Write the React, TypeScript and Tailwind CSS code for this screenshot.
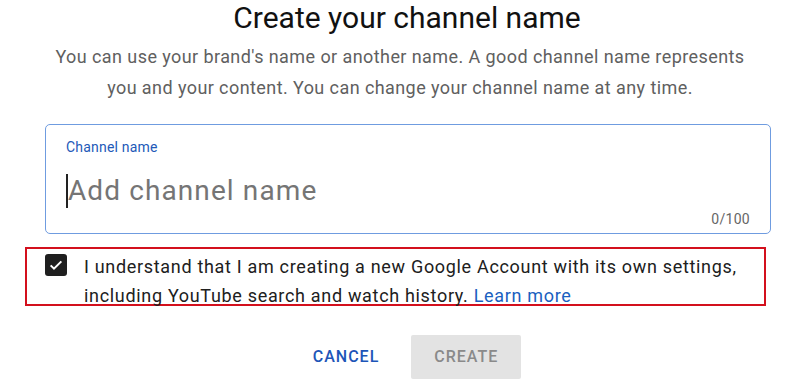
const App = () => {
  return (
    <div className="w-[800px] h-[391px] bg-white overflow-hidden font-['Roboto',sans-serif]">
      <h1 className="pl-[14px] text-center text-[30px] leading-[36px] text-[#111]">
        Create your channel name
      </h1>

      <p className="mt-[5px] text-center text-[18px] leading-[31px] tracking-[0.42px] text-[#606060]">
        You can use your brand's name or another name. A good channel name represents
        <br />
        you and your content. You can change your channel name at any time.
      </p>

      <div className="mx-[45px] mt-[21px] w-[726px] h-[110px] rounded-[5px] border border-[#6f9ce0] px-[20px] pt-[13px] flex flex-col">
        <span className="text-[14px] leading-[18px] tracking-[0.2px] text-[#2359b8]">Channel name</span>
        <div className="mt-[18px] flex items-center h-[34px]">
          <span className="w-[2px] h-[34px] bg-[#222]" />
          <span className="text-[28px] leading-[34px] tracking-[1.1px] text-[#757575]">Add channel name</span>
        </div>
        <span className="mt-auto mb-[5px] self-end text-[14px] leading-[18px] tracking-[0.3px] text-[#666]">0/100</span>
      </div>

      <div className="mx-[25px] mt-[13px] w-[741px] h-[59px] border-2 border-[#d3101d] flex pl-[18px] pt-[3px]">
        <div className="mt-[2px] w-[22px] h-[22px] rounded-[3px] bg-[#1f1f1f] flex items-center justify-center shrink-0">
          <svg width="16" height="16" viewBox="0 0 24 24" fill="none">
            <path d="M4 12.5l5 5L20 6.5" stroke="white" strokeWidth="3" />
          </svg>
        </div>
        <p className="ml-[17px] text-[18px] leading-[29px] tracking-[0.68px] text-[#202020]">
          I understand that I am creating a new Google Account with its own settings,
          <br />
          including YouTube search and watch history.{" "}
          <span className="text-[#1a5fc0]">Learn more</span>
        </p>
      </div>

      <div className="mt-[29px] flex justify-center items-center gap-[14px] pl-[16px]">
        <button className="px-[18px] h-[44px] text-[16px] font-medium tracking-[1px] text-[#1d55b8]">CANCEL</button>
        <button className="w-[110px] h-[44px] rounded-[2px] bg-[#e3e3e3] text-[16px] font-medium tracking-[1px] text-[#8a8a8a]">
          CREATE
        </button>
      </div>
    </div>
  );
};

export default App;
